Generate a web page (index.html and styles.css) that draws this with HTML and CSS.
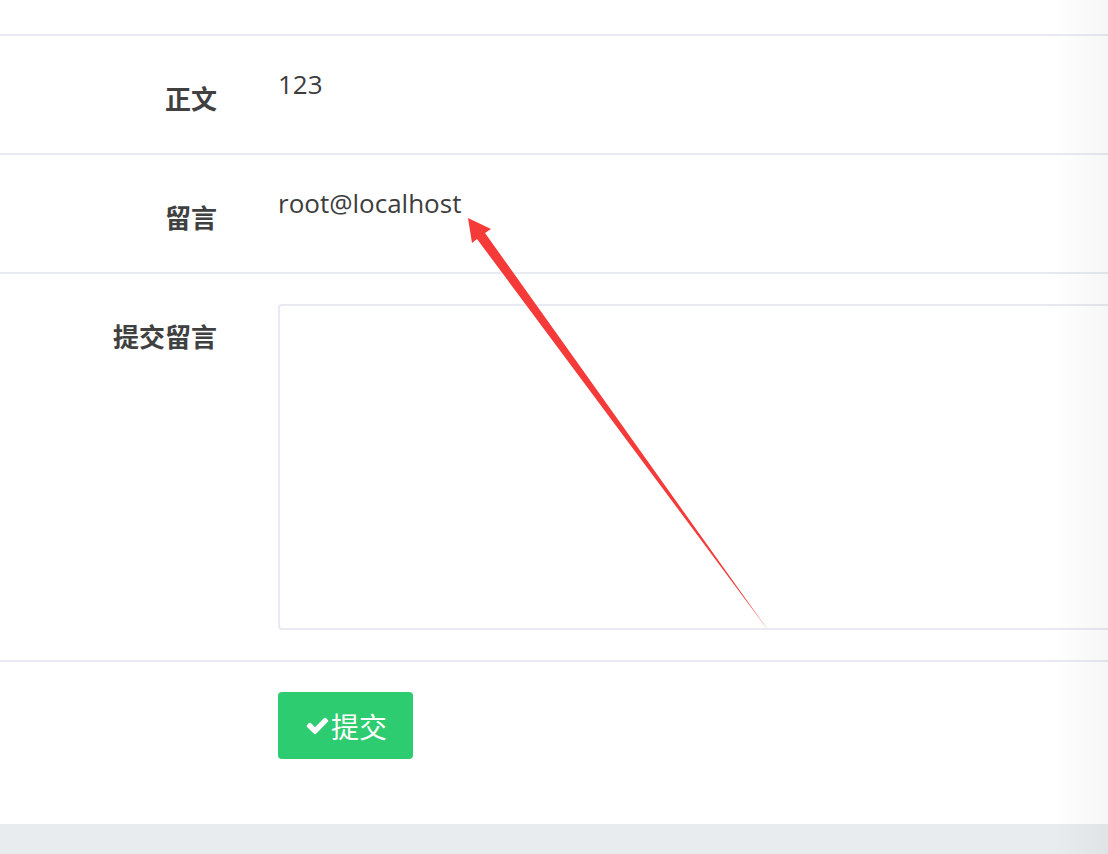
FILE: index.html
```html
<!DOCTYPE html>
<html lang="zh-CN">
<head>
<meta charset="utf-8">
<title>留言</title>
<link rel="stylesheet" href="styles.css">
</head>
<body>
<div class="page">
  <div class="top-strip"></div>
  <form class="form">
    <div class="row">
      <label class="label">正文</label>
      <div class="value">123</div>
    </div>
    <div class="row">
      <label class="label">留言</label>
      <div class="value">root@localhost</div>
    </div>
    <div class="row row-area">
      <label class="label">提交留言</label>
      <div class="control"><textarea class="textarea"></textarea></div>
    </div>
    <div class="row row-btn">
      <div class="label"></div>
      <div class="control">
        <button type="button" class="btn">
          <svg class="check" viewBox="0 0 1792 1792" width="25" height="25"><path fill="#fff" d="M1671 566q0 40-28 68l-724 724-136 136q-28 28-68 28t-68-28l-136-136-362-362q-28-28-28-68t28-68l136-136q28-28 68-28t68 28l294 295 656-657q28-28 68-28t68 28l136 136q28 28 28 68z"/></svg><span>提交</span>
        </button>
      </div>
    </div>
  </form>
  <div class="footer"></div>
  <svg class="arrow" width="1108" height="854" viewBox="0 0 1108 854">
    <polygon fill="#f53a3a" points="468,218 472,243 477,239 768,630 485,233 491,229"/>
  </svg>
  <div class="edge-shade"></div>
</div>
</body>
</html>
```

FILE: styles.css
```css
html, body {
  margin: 0;
  padding: 0;
  background: #fff;
}
body {
  font-family: "Open Sans", "Noto Sans CJK SC", sans-serif;
  color: #3f3f3f;
  overflow: hidden;
}
.page {
  position: relative;
  width: 1108px;
  height: 854px;
  overflow: hidden;
}
.top-strip {
  height: 34px;
}
.form {
  margin: 0;
}
.row {
  display: grid;
  grid-template-columns: 217px 1fr;
  column-gap: 61px;
  border-top: 2px solid #e8eaf2;
  height: 117px;
  box-sizing: content-box;
}
.row-area {
  height: 386px;
}
.row-btn {
  height: 162px;
}
.label {
  text-align: right;
  font-family: "Noto Sans CJK SC", sans-serif;
  font-weight: bold;
  font-size: 26px;
  line-height: 36px;
  padding-top: 44px;
  color: #404040;
}
.value {
  font-size: 26px;
  line-height: 36px;
  padding-top: 30px;
  color: #3d3d3d;
}
.control {
  padding-top: 30px;
}
.textarea {
  display: block;
  width: 870px;
  height: 326px;
  box-sizing: border-box;
  border: 2px solid #e8e9f1;
  border-radius: 4px;
  resize: none;
  background: #fff;
  outline: none;
}
.btn {
  display: flex;
  align-items: center;
  height: 67px;
  padding: 0 26px 0 27px;
  border: none;
  border-radius: 4px;
  background: #2ecc71;
  color: #fff;
  font-family: "Noto Sans CJK SC", sans-serif;
  font-size: 28px;
  cursor: pointer;
}
.check {
  display: block;
  margin-right: 1px;
}
.footer {
  height: 30px;
  background: #e9ecef;
}
.arrow {
  position: absolute;
  left: 0;
  top: 0;
  pointer-events: none;
}
.edge-shade {
  position: absolute;
  top: 0;
  right: 0;
  width: 56px;
  height: 854px;
  background: linear-gradient(to right, rgba(0,0,0,0), rgba(0,0,0,0.035));
  pointer-events: none;
}
```
